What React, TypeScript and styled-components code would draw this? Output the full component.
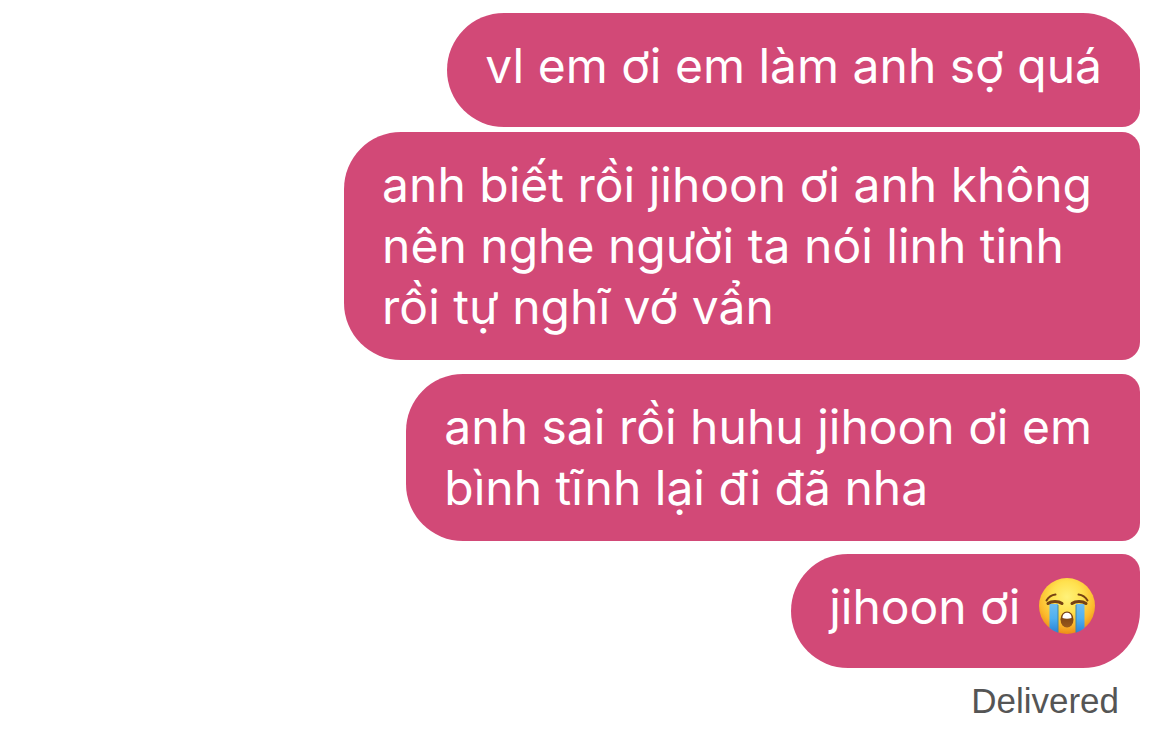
import React from "react";
import styled, { createGlobalStyle } from "styled-components";

const GlobalStyle = createGlobalStyle`
  * { box-sizing: border-box; }
  body { margin: 0; background: #ffffff; font-family: Inter, "Liberation Sans", sans-serif; }
`;

const Thread = styled.main`
  display: flex;
  flex-direction: column;
  align-items: flex-end;
  padding: 13px 30px 24px;
`;

const Bubble = styled.p<{ $gap?: number; $position?: "first" | "middle" | "last"; $wrapped?: boolean }>`
  margin: ${(p) => p.$gap ?? 0}px 0 0;
  min-height: 114px;
  padding: 22px ${(p) => (p.$wrapped ? 48 : 38)}px 23px 38px;
  border-radius: 57px ${(p) => (p.$position === "first" ? 57 : 18)}px
    ${(p) => (p.$position === "last" ? 57 : 18)}px 57px;
  background: #d24977;
  color: #ffffff;
  font-size: 48px;
  line-height: 61px;
  white-space: pre-line;
`;

const Emoji = styled.svg`
  width: 58px;
  height: 58px;
  margin: 0 6px 0 4px;
  vertical-align: -11px;
`;

const Status = styled.p`
  margin: 15px 21px 0 0;
  color: #555555;
  font-family: "Liberation Sans", Arial, sans-serif;
  font-size: 35px;
  line-height: 36px;
`;

function CryingFace() {
  return (
    <Emoji viewBox="0 0 58 58" role="img" aria-label="Loudly crying face">
      <defs>
        <radialGradient id="face" cx="29" cy="20" r="39" gradientUnits="userSpaceOnUse">
          <stop offset="0" stopColor="#fff27a" />
          <stop offset="0.4" stopColor="#ffe14e" />
          <stop offset="0.72" stopColor="#fcb92c" />
          <stop offset="1" stopColor="#e88213" />
        </radialGradient>
        <linearGradient id="tears" x1="0" y1="0" x2="0" y2="1">
          <stop offset="0" stopColor="#6fbdf0" />
          <stop offset="0.5" stopColor="#4fb0f0" />
          <stop offset="1" stopColor="#2c83d8" />
        </linearGradient>
        <linearGradient id="mouth" x1="0" y1="0" x2="0" y2="1">
          <stop offset="0" stopColor="#6f3a10" />
          <stop offset="1" stopColor="#9a5a1c" />
        </linearGradient>
      </defs>
      <circle cx="29" cy="29" r="28" fill="url(#face)" />
      <path d="M11.5 27H20V55.5C17 54.500 14 53 11.500 51Z" fill="url(#tears)" />
      <path d="M38 27H46.500V51C44 53 41 54.500 38 55.500Z" fill="url(#tears)" />
      <path d="M20 28V55.500M38 28V55.500" stroke="#3f86a8" strokeWidth="1" />
      <g fill="none" stroke="#764213" strokeLinecap="round">
        <path d="M8.500 23.500C10.500 20 13.500 18 17.500 17.500" strokeWidth="2" />
        <path d="M49.500 23.500C47.500 20 44.500 18 40.500 17.500" strokeWidth="2" />
        <path d="M10 26.500C13.500 23.800 20.500 23.800 24 26.500" strokeWidth="3" />
        <path d="M34 26.500C37.500 23.800 44.500 23.800 48 26.500" strokeWidth="3" />
      </g>
      <ellipse cx="29" cy="42.500" rx="6.500" ry="8" fill="url(#mouth)" />
      <path d="M24.500 41C24 34 34 34 33.500 41C31 42 27 42 24.500 41Z" fill="#ffffff" />
    </Emoji>
  );
}

export default function App() {
  return (
    <>
      <GlobalStyle />
      <Thread>
        <Bubble $position="first">vl em ơi em làm anh sợ quá</Bubble>
        <Bubble $gap={5} $wrapped>
          {"anh biết rồi jihoon ơi anh không\nnên nghe người ta nói linh tinh\nrồi tự nghĩ vớ vẩn"}
        </Bubble>
        <Bubble $gap={14} $wrapped>{"anh sai rồi huhu jihoon ơi em\nbình tĩnh lại đi đã nha"}</Bubble>
        <Bubble $gap={13} $position="last">
          jihoon ơi <CryingFace />
        </Bubble>
        <Status>Delivered</Status>
      </Thread>
    </>
  );
}
